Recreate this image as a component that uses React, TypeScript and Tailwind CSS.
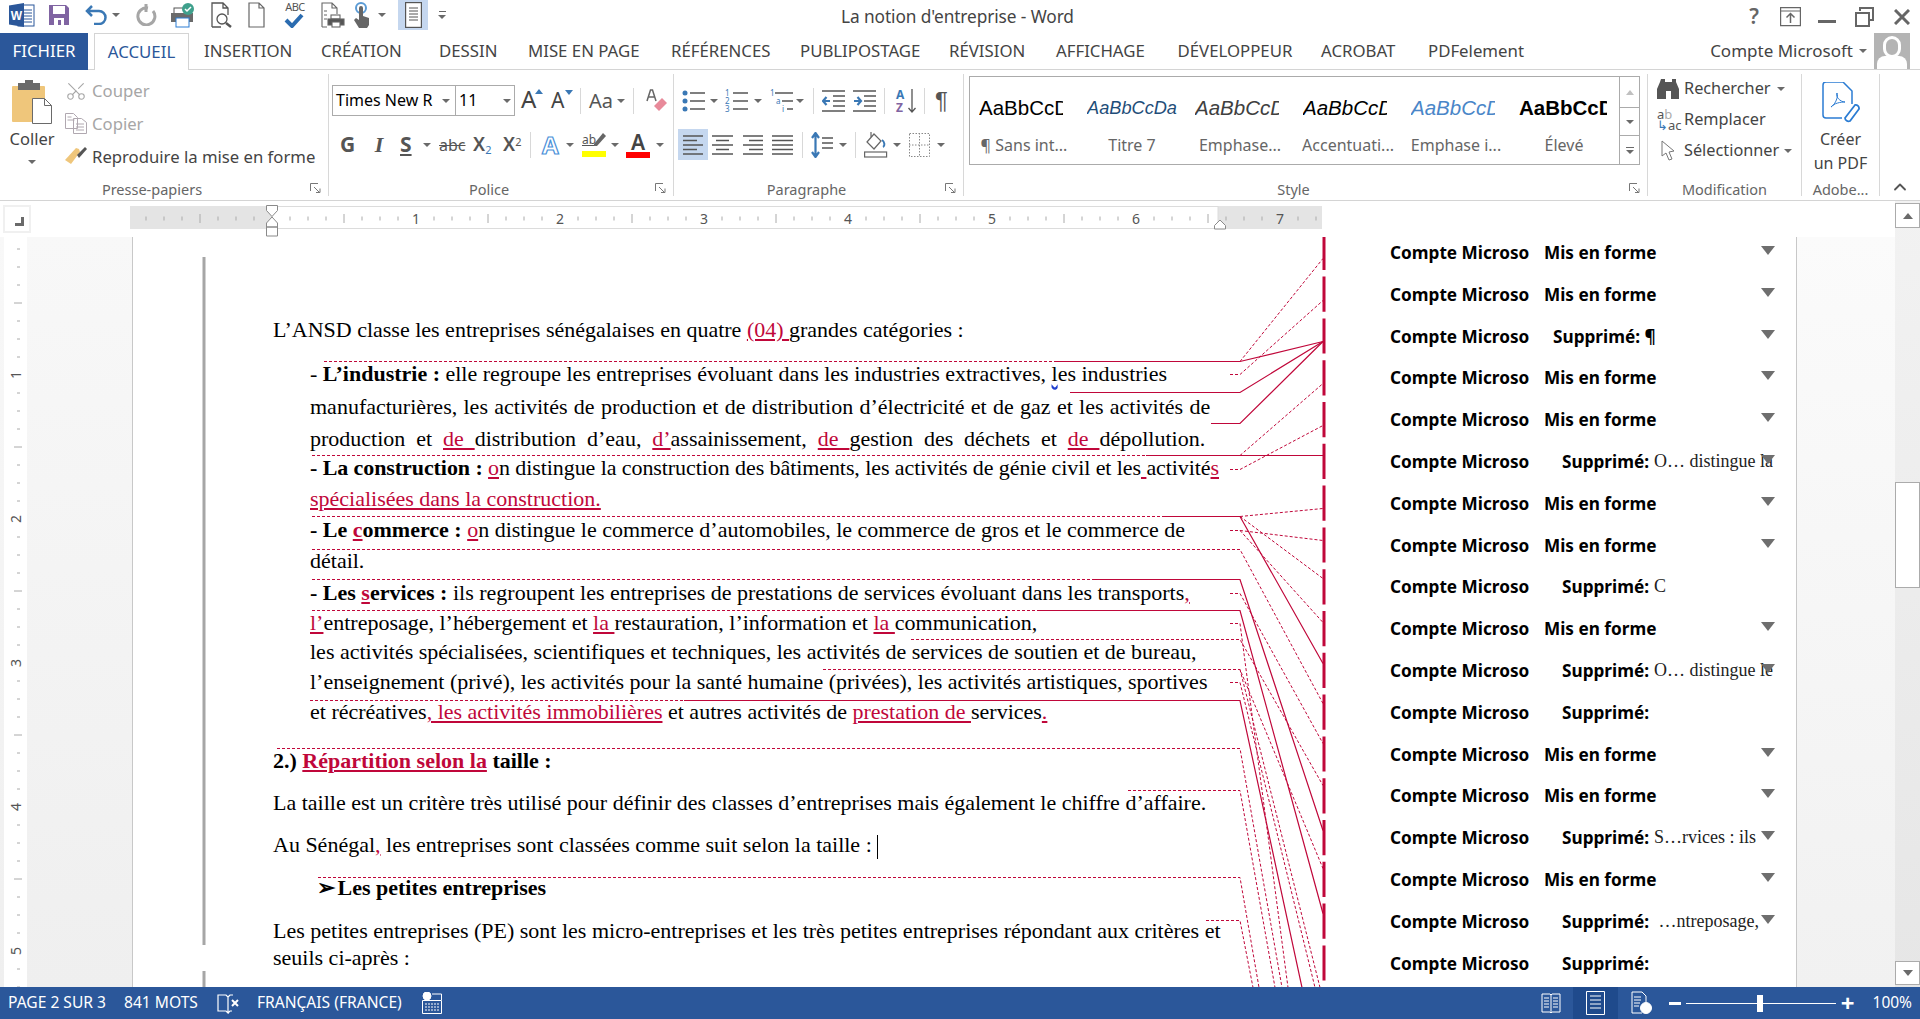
import { ReactNode } from "react";
import { ChevronUp, Scissors } from "lucide-react";

const RED = "#c0073a";

function Caret({ className = "" }: { className?: string }) {
  return <span className={`inline-block w-0 h-0 border-x-[4px] border-t-[4px] border-x-transparent border-t-[#6a6a6a] ${className}`} />;
}

function Sep() {
  return <span className="block w-px h-[26px] bg-[#d8d8d8]" />;
}

function Launcher() {
  return (
    <svg width="11" height="11" viewBox="0 0 11 11" className="absolute right-[7px] top-[1px]" fill="none" stroke="#777">
      <path d="M.5 8V.5H8" />
      <path d="M4 4l5 5M6 9.5h4v-4" />
    </svg>
  );
}

function Group({ className, label, launcher, children }: { className: string; label: string; launcher?: boolean; children: ReactNode }) {
  return (
    <div className={`flex flex-col shrink-0 my-[4px] border-r border-[#d8d8d8] ${className}`}>
      <div className="flex-1 min-h-0">{children}</div>
      <div className={`relative h-[14px] leading-[14px] text-center text-[14.5px] text-[#666] whitespace-nowrap ${launcher ? "pr-[24px]" : ""}`}>
        {label}
        {launcher && <Launcher />}
      </div>
    </div>
  );
}

function Lines({ d, w = 23, h = 24 }: { d: string; w?: number; h?: number }) {
  return (
    <svg width={w} height={h} viewBox={`0 0 ${w} ${h}`} fill="none" stroke="#555" strokeWidth="1.4">
      <path d={d} />
    </svg>
  );
}

function WordLogo() {
  return (
    <svg width="26" height="26" viewBox="0 0 26 26">
      <rect x="9" y="3" width="16" height="21" fill="#fff" stroke="#2b579a" />
      <path d="M14 8h9M14 11h9M14 14h9M14 17h9M14 20h9" stroke="#2b579a" />
      <path d="M0 3.5 15 1v24L0 22.5z" fill="#2b579a" />
      <text x="7.5" y="17.5" textAnchor="middle" fontSize="12" fontWeight="700" fill="#fff" fontFamily="Liberation Sans">W</text>
    </svg>
  );
}

function QuickAccess() {
  return (
    <div className="flex items-center h-[30px] shrink-0">
      <span className="ml-[9px]"><WordLogo /></span>
      <svg className="ml-[14px]" width="20" height="20" viewBox="0 0 20 20">
        <path d="M0 0h17l3 3v17H0z" fill="#8064a2" />
        <rect x="4" y="1" width="12" height="8" fill="#fff" />
        <rect x="5" y="13" width="10" height="7" fill="#fff" />
        <rect x="9" y="15" width="3" height="5" fill="#8064a2" />
      </svg>
      <svg className="ml-[16px]" width="23" height="20" viewBox="0 0 23 20" fill="none" stroke="#3a78b5" strokeWidth="2.5">
        <path d="M7 1 2 6l5 5M2 6h12a6.5 6.5 0 0 1 0 13H9" />
      </svg>
      <Caret className="ml-[4px]" />
      <svg className="ml-[15px]" width="22" height="22" viewBox="0 0 22 22" fill="none" stroke="#a6a6a6" strokeWidth="3">
        <path d="M13 4a8.5 8.5 0 1 0 5 3M11 0v8" />
      </svg>
      <svg className="ml-[14px]" width="24" height="26" viewBox="0 0 24 26">
        <rect x="3" y="6" width="14" height="6" fill="#fff" stroke="#555" />
        <rect x="0" y="11" width="22" height="9" fill="#6a6a6a" />
        <rect x="5" y="16" width="13" height="9" fill="#fff" stroke="#2b7cd3" />
        <circle cx="17" cy="7" r="6" fill="#3fa08c" />
        <path d="m14 7 2 2 4-4" stroke="#fff" strokeWidth="1.5" fill="none" />
      </svg>
      <svg className="ml-[16px]" width="22" height="26" viewBox="0 0 22 26" fill="none" stroke="#555" strokeWidth="1.3">
        <path d="M1 25V1h11l5 5v7M12 1v5h5M1 25h9" />
        <circle cx="11" cy="17" r="5" />
        <path d="m15 21 5 4" strokeWidth="2.5" />
      </svg>
      <svg className="ml-[15px]" width="17" height="26" viewBox="0 0 17 26" fill="#fff" stroke="#666" strokeWidth="1.2">
        <path d="M1 25V1h10l5 5v19zM11 1v5h5" />
      </svg>
      <div className="ml-[19px] w-[22px] h-[28px]">
        <span className="block text-[11px] leading-[11px] text-[#555] text-center tracking-[-0.5px]">ABC</span>
        <svg width="20" height="15" viewBox="0 0 20 15" className="mt-[1px]" fill="none" stroke="#2b6cb0" strokeWidth="4">
          <path d="m2 7 6 6L18 2" />
        </svg>
      </div>
      <svg className="ml-[15px]" width="24" height="26" viewBox="0 0 24 26" fill="none" stroke="#666" strokeWidth="1.1">
        <path d="M1 25V1h10l5 5v6M11 1v5h5M1 25h5" />
        <path d="M3 9h3M3 13h3M3 17h3" />
        <rect x="10" y="13" width="9" height="4" fill="#fff" />
        <rect x="7" y="17" width="16" height="6" fill="#555" />
        <rect x="11" y="20" width="8" height="5" fill="#fff" />
      </svg>
      <svg className="ml-[9px]" width="17" height="26" viewBox="0 0 17 26">
        <circle cx="7" cy="6" r="5" fill="none" stroke="#5b9bd5" strokeWidth="2" />
        <path d="M5 6a2 2 0 0 1 4 0v8l6 2v7l-2 3H5l-5-8 2-2 3 2z" fill="#666" />
      </svg>
      <Caret className="ml-[7px]" />
      <div className="ml-[12px] flex items-center justify-center w-[30px] h-[30px] bg-[#c5d7ef]">
        <svg width="17" height="26" viewBox="0 0 17 26" fill="#fff" stroke="#555" strokeWidth="1.2">
          <rect x=".6" y=".6" width="15.8" height="24.8" />
          <path d="M4 6h9M4 9h9M4 12h9M4 15h9M4 18h9" strokeWidth="1" />
        </svg>
      </div>
      <span className="ml-[10px] flex flex-col items-center gap-[3px]">
        <span className="w-[7px] h-px bg-[#666]" />
        <Caret />
      </span>
    </div>
  );
}

function TitleBar() {
  return (
    <div className="flex h-[33px] items-start shrink-0 text-[#444]">
      <QuickAccess />
      <div className="ml-[395px] mt-[5px] text-[17.3px] leading-[24px] tracking-[-0.1px] whitespace-nowrap">La notion d'entreprise - Word</div>
      <div className="ml-auto flex items-center h-[33px] mr-[10px] text-[#666]">
        <span className="text-[21px] font-semibold leading-none">?</span>
        <svg className="ml-[21px]" width="21" height="20" viewBox="0 0 21 20" fill="none" stroke="#666" strokeWidth="1.2">
          <path d="M.6.6h19.8v18H.6zM.6 4h19.8" />
          <path d="M10.5 16V7M6.5 10.5l4-4 4 4" strokeWidth="1.5" />
        </svg>
        <span className="ml-[17px] mt-[9px] w-[18px] h-[3px] bg-[#666]" />
        <svg className="ml-[19px]" width="19" height="20" viewBox="0 0 19 20" fill="none" stroke="#666" strokeWidth="2">
          <path d="M5 4V1h13v12h-4" />
          <path d="M1 6h13v13H1z" />
        </svg>
        <svg className="ml-[20px]" width="16" height="16" viewBox="0 0 16 16" fill="none" stroke="#666" strokeWidth="3">
          <path d="m1 1 14 14M15 1 1 15" />
        </svg>
      </div>
    </div>
  );
}

const TABS = [
  { label: "INSERTION", className: "ml-[15px] w-[117px]" },
  { label: "CRÉATION", className: "w-[118px]" },
  { label: "DESSIN", className: "w-[89px]" },
  { label: "MISE EN PAGE", className: "w-[143px]" },
  { label: "RÉFÉRENCES", className: "w-[129px]" },
  { label: "PUBLIPOSTAGE", className: "w-[149px]" },
  { label: "RÉVISION", className: "w-[107px]" },
  { label: "AFFICHAGE", className: "w-[121.5px]" },
  { label: "DÉVELOPPEUR", className: "w-[143.5px]" },
  { label: "ACROBAT", className: "w-[107px]" },
  { label: "PDFelement", className: "w-[100px]" },
];

function TabRow() {
  return (
    <div className="flex h-[37px] shrink-0 border-b border-[#d4d4d4] text-[16.8px] leading-[36px] text-[#444]">
      <div className="w-[88px] h-[37px] bg-[#2b579a] text-white text-center">FICHIER</div>
      <div className="ml-[6px] w-[95px] h-[37px] border-x border-t border-[#d4d4d4] bg-white text-[#2b579a] text-center">ACCUEIL</div>
      {TABS.map((t) => (
        <div key={t.label} className={`shrink-0 whitespace-nowrap ${t.className}`}>{t.label}</div>
      ))}
      <div className="ml-auto flex items-center h-[36px] whitespace-nowrap text-[17px]">
        Compte Microsoft
        <Caret className="ml-[6px] mr-[7px]" />
        <div className="relative w-[36px] h-[36px] mr-[10px] bg-[#b4b4b4] overflow-hidden">
          <span className="absolute left-[9px] top-[3px] w-[18px] h-[22px] rounded-full border-[3px] border-white" />
          <span className="absolute left-[3px] top-[23px] w-[30px] h-[16px] rounded-t-[8px] bg-white" />
        </div>
      </div>
    </div>
  );
}

function Clipboard() {
  return (
    <div className="flex pt-[6px]">
      <div className="w-[64px] flex flex-col items-center text-[16.5px] text-[#444] shrink-0">
        <svg width="42" height="44" viewBox="0 0 42 44">
          <rect x="1" y="6" width="33" height="36" rx="1" fill="#efc67b" />
          <rect x="7" y="3" width="22" height="7" fill="#6a6a6a" />
          <rect x="14" y="0" width="8" height="5" fill="#6a6a6a" />
          <path d="M21.5 18.5h12l7 7v18h-19z" fill="#fff" stroke="#6a6a6a" />
          <path d="M33.5 18.5v7h7" fill="none" stroke="#6a6a6a" />
        </svg>
        <span className="leading-[24px] mt-[3px]">Coller</span>
        <Caret className="mt-[9px]" />
      </div>
      <div className="ml-[1px] -mt-[6px] text-[16.7px] leading-[33px] whitespace-nowrap">
        <div className="flex items-center text-[#a6a6a6] h-[33px]">
          <Scissors size={22} strokeWidth={1.2} className="-rotate-90 shrink-0" />
          <span className="ml-[5px]">Couper</span>
        </div>
        <div className="flex items-center text-[#a6a6a6] h-[33px]">
          <svg width="22" height="21" viewBox="0 0 22 21" fill="#fff" stroke="#b0a8b0">
            <path d="M.5.5h8l4 4v11H.5zM8.5 5.5h8l5 4v11h-13zM2.5 4h4M2.5 7h7M11 11h8M11 14h8M11 17h8" />
          </svg>
          <span className="ml-[5px]">Copier</span>
        </div>
        <div className="flex items-center text-[#444] h-[33px] -ml-[1px]">
          <svg width="24" height="22" viewBox="0 0 24 22">
            <path d="m12 2 3 1 1 3-9 12-6-4z" fill="#efc67b" />
            <path d="M13 9 21 1l2 2-8 9z" fill="#555" />
          </svg>
          <span className="ml-[4px]">Reproduire la mise en forme</span>
        </div>
      </div>
    </div>
  );
}

function SmallA({ dir }: { dir: "up" | "down" }) {
  return (
    <span className="relative block w-[24px] text-[#444] leading-[26px]">
      <span className={dir === "up" ? "text-[24px]" : "text-[21px]"}>A</span>
      <span className={`absolute right-[2px] top-[3px] w-0 h-0 border-x-[4px] border-x-transparent ${dir === "up" ? "border-b-[5px] border-b-[#3a78b5]" : "border-t-[5px] border-t-[#3a78b5]"}`} />
    </span>
  );
}

function Police() {
  return (
    <div>
      <div className="flex items-center h-[31px] mt-[11px]">
        <div className="ml-[3px] flex w-[183px] h-[31px] border border-[#ababab] text-[16px] leading-[29px] text-black shrink-0">
          <div className="w-[123px] border-r border-[#ababab] pl-[3px] flex items-center whitespace-nowrap">
            Times New R
            <Caret className="ml-auto mr-[5px]" />
          </div>
          <div className="flex-1 pl-[3px] flex items-center">
            11
            <Caret className="ml-auto mr-[3px]" />
          </div>
        </div>
        <span className="ml-[6px]"><SmallA dir="up" /></span>
        <span className="ml-[6px]"><SmallA dir="down" /></span>
        <span className="ml-[5px]"><Sep /></span>
        <span className="ml-[8px] w-[28px] text-[20px] text-[#555] whitespace-nowrap">Aa</span>
        <Caret />
        <span className="ml-[8px]"><Sep /></span>
        <svg className="ml-[12px]" width="21" height="24" viewBox="0 0 21 24">
          <path d="M1 12 4.5 1h2L10 12M2.5 8h6" fill="none" stroke="#666" strokeWidth="1.5" />
          <path d="m8 17 8-8 5 5-8 8z" fill="#e88a9a" />
        </svg>
      </div>
      <div className="flex items-center h-[31px] mt-[13px] text-[#555]">
        <span className="ml-[11px] w-[16px] text-[21px] font-bold">G</span>
        <span className="ml-[14px] w-[18px] text-[22px] italic font-bold font-['Liberation_Serif'] text-center">I</span>
        <span className="ml-[12px] w-[14px] text-[21px] font-bold underline">S</span>
        <Caret className="ml-[9px]" />
        <span className="ml-[8px] w-[25px] text-[16px] line-through">abc</span>
        <span className="ml-[9px] w-[20px] text-[19px] font-semibold whitespace-nowrap">X<sub className="text-[11px] text-[#3a78b5] font-normal">2</sub></span>
        <span className="ml-[10px] w-[20px] text-[19px] font-semibold whitespace-nowrap">X<sup className="text-[11px] font-normal">2</sup></span>
        <span className="ml-[7px]"><Sep /></span>
        <span className="ml-[11px] w-[20px] text-[24px] leading-[28px] font-bold text-white [-webkit-text-stroke:1.2px_#4a90d9]">A</span>
        <Caret className="ml-[4px]" />
        <span className="ml-[8px] w-[24px] flex flex-col">
          <span className="relative text-[12px] leading-[16px] h-[19px] underline">
            ab
            <svg width="14" height="16" viewBox="0 0 14 16" className="absolute right-0 top-0">
              <path d="m2 12 9-11 3 3-9 10H2z" fill="#666" />
            </svg>
          </span>
          <span className="h-[6px] bg-[#ffff00]" />
        </span>
        <Caret className="ml-[5px]" />
        <span className="ml-[7px] w-[24px] flex flex-col items-center">
          <span className="text-[21px] leading-[20px] font-semibold text-[#444]">A</span>
          <span className="w-[24px] h-[6px] bg-[#ff0000]" />
        </span>
        <Caret className="ml-[6px]" />
      </div>
    </div>
  );
}

function Paragraphe() {
  return (
    <div>
      <div className="flex items-center h-[31px] mt-[11px]">
        <span className="ml-[8px] flex">
          <svg width="23" height="24" viewBox="0 0 23 24" fill="none">
            <circle cx="3" cy="4" r="2.5" fill="#3a78b5" />
            <circle cx="3" cy="12" r="2.5" fill="#3a78b5" />
            <circle cx="3" cy="20" r="2.5" fill="#3a78b5" />
            <path d="M8 4h15M8 12h15M8 20h15" stroke="#555" strokeWidth="1.4" />
          </svg>
        </span>
        <Caret className="ml-[5px]" />
        <span className="ml-[7px] flex">
          <svg width="23" height="24" viewBox="0 0 23 24" fill="none">
            <text x="0" y="7" fontSize="8" fill="#3a78b5">1</text>
            <text x="0" y="15" fontSize="8" fill="#3a78b5">2</text>
            <text x="0" y="23" fontSize="8" fill="#3a78b5">3</text>
            <path d="M8 4h15M8 12h15M8 20h15" stroke="#555" strokeWidth="1.4" />
          </svg>
        </span>
        <Caret className="ml-[6px]" />
        <span className="ml-[8px] flex">
          <svg width="23" height="24" viewBox="0 0 23 24" fill="none">
            <text x="0" y="7" fontSize="8" fill="#3a78b5">1</text>
            <text x="6" y="15" fontSize="8" fill="#3a78b5">a</text>
            <text x="12" y="23" fontSize="8" fill="#3a78b5">i</text>
            <path d="M5 4h18M12 12h11M17 20h6" stroke="#555" strokeWidth="1.4" />
          </svg>
        </span>
        <Caret className="ml-[3px]" />
        <span className="ml-[9px]"><Sep /></span>
        <svg className="ml-[8px]" width="23" height="24" viewBox="0 0 23 24" fill="none" stroke="#555" strokeWidth="1.3">
          <path d="M0 2h23M11 7h12M11 12h12M11 17h12M0 22h23" />
          <path d="M8 12H1M4.5 8 1 12l3.5 4" stroke="#3a78b5" strokeWidth="2.2" />
        </svg>
        <svg className="ml-[8px]" width="23" height="24" viewBox="0 0 23 24" fill="none" stroke="#555" strokeWidth="1.3">
          <path d="M0 2h23M11 7h12M11 12h12M11 17h12M0 22h23" />
          <path d="M1 12h7M4.5 8 8 12l-3.5 4" stroke="#3a78b5" strokeWidth="2.2" />
        </svg>
        <span className="ml-[8px]"><Sep /></span>
        <span className="ml-[11px] relative flex flex-col w-[20px] text-[12px] leading-[13px] font-bold">
          <span className="text-[#3a78b5]">A</span>
          <span className="text-[#8064a2]">Z</span>
          <svg width="8" height="24" viewBox="0 0 8 24" className="absolute right-0 top-[1px]" fill="none" stroke="#555" strokeWidth="1.3">
            <path d="M4 0v23M.5 19 4 23l3.5-4" />
          </svg>
        </span>
        <span className="ml-[8px]"><Sep /></span>
        <span className="ml-[10px] text-[24px] leading-none text-[#555] font-['Liberation_Sans']">¶</span>
      </div>
      <div className="flex items-center h-[31px] mt-[13px]">
        <span className="ml-[4px] flex items-center justify-center w-[30px] h-[31px] bg-[#c5d7ef]">
          <Lines w={22} h={22} d="M1 2h20M1 6.5h14M1 11h20M1 15.5h14M1 20h20" />
        </span>
        <span className="ml-[4px] flex"><Lines w={21} h={22} d="M0 2h21M4 6.5h13M0 11h21M4 15.5h13M0 20h21" /></span>
        <span className="ml-[10px] flex"><Lines w={20} h={22} d="M0 2h20M6 6.5h14M0 11h20M6 15.5h14M0 20h20" /></span>
        <span className="ml-[9px] flex"><Lines w={21} h={22} d="M0 2h21M0 6.5h21M0 11h21M0 15.5h21M0 20h21" /></span>
        <span className="ml-[9px]"><Sep /></span>
        <svg className="ml-[8px]" width="23" height="26" viewBox="0 0 23 26" fill="none">
          <path d="M4.5 2v22M1 6l3.5-5L8 6M1 20l3.5 5L8 20" stroke="#3a78b5" strokeWidth="2.2" />
          <path d="M11 6h11M11 11h11M11 16h11" stroke="#555" strokeWidth="1.4" />
        </svg>
        <Caret className="ml-[5px]" />
        <span className="ml-[8px]"><Sep /></span>
        <svg className="ml-[8px]" width="24" height="27" viewBox="0 0 24 27" fill="none" stroke="#666" strokeWidth="1.2">
          <path d="m3 11 7-8 7 7-7 8zM7 1v5" />
          <path d="M18 9c3 2 3 6 1 7" stroke="#3a78b5" strokeWidth="2" />
          <rect x=".6" y="21" width="22" height="5" />
        </svg>
        <Caret className="ml-[5px]" />
        <svg className="ml-[8px]" width="21" height="24" viewBox="0 0 21 24" fill="none" stroke="#888" strokeDasharray="1.5 1.5">
          <path d="M.5.5h20v23H.5zM10.5 0v24M0 12h21" />
        </svg>
        <Caret className="ml-[7px]" />
      </div>
    </div>
  );
}

const STYLES = [
  { preview: "AaBbCcD", name: "¶ Sans int...", className: "w-[84px] text-[20.5px] text-black" },
  { preview: "AaBbCcDa", name: "Titre 7", className: "w-[93px] text-[18.2px] italic text-[#1f4e79]" },
  { preview: "AaBbCcD", name: "Emphase...", className: "w-[84px] text-[20.5px] italic text-[#404040]" },
  { preview: "AaBbCcD", name: "Accentuati...", className: "w-[84px] text-[20.5px] italic text-black" },
  { preview: "AaBbCcD", name: "Emphase i...", className: "w-[84px] text-[20.5px] italic text-[#4a86c8]" },
  { preview: "AaBbCcD", name: "Élevé", className: "w-[88px] text-[20.5px] font-bold text-black" },
];

function Styles() {
  return (
    <div className="ml-[5px] mt-[2px] flex w-[671px] h-[89px] border border-[#ababab]">
      {STYLES.map((s) => (
        <div key={s.name} className="w-[108px] shrink-0">
          <div className={`ml-[9px] mt-[18px] h-[26px] overflow-hidden whitespace-nowrap font-['Liberation_Sans'] leading-[26px] ${s.className}`}>{s.preview}</div>
          <div className="mt-[12px] text-center text-[16px] leading-[24px] text-[#666] whitespace-nowrap">{s.name}</div>
        </div>
      ))}
      <div className="ml-auto w-[20px] border-l border-[#ababab] flex flex-col">
        <div className="h-[31px] flex items-center justify-center border-b border-[#ababab]">
          <span className="w-0 h-0 border-x-[4px] border-b-[5px] border-x-transparent border-b-[#c0c0c0]" />
        </div>
        <div className="h-[28px] flex items-center justify-center border-b border-[#ababab]">
          <Caret />
        </div>
        <div className="flex-1 flex flex-col items-center justify-center gap-[2px]">
          <span className="w-[8px] h-px bg-[#6a6a6a]" />
          <Caret />
        </div>
      </div>
    </div>
  );
}

function Modification() {
  return (
    <div className="-mt-[1px] text-[16.3px] text-[#444] whitespace-nowrap">
      <div className="flex items-center h-[31px] ml-[9px]">
        <svg width="23" height="20" viewBox="0 0 23 20" fill="#555">
          <path d="M4 0h4v3h7V0h4v3l3 7v10h-8v-8h-5v8H0V10l3-7z" />
        </svg>
        <span className="ml-[4px] w-[93px]">Rechercher</span>
        <Caret />
      </div>
      <div className="flex items-center h-[31px] ml-[9px]">
        <span className="w-[23px] flex flex-col text-[13px] leading-[11px] text-[#555]">
          <span>a<span className="text-[#aaa]">b</span></span>
          <span className="whitespace-nowrap"><span className="text-[#3a78b5]">↳</span>ac</span>
        </span>
        <span className="ml-[4px]">Remplacer</span>
      </div>
      <div className="flex items-center h-[31px] ml-[9px]">
        <svg width="23" height="22" viewBox="0 0 23 22" fill="#fff" stroke="#777">
          <path d="M5 1v15l4-3 3 7 3-1-3-7 5-1z" />
        </svg>
        <span className="ml-[4px] w-[100px]">Sélectionner</span>
        <Caret />
      </div>
    </div>
  );
}

function Adobe() {
  return (
    <div className="flex flex-col items-center text-[16px] text-[#444] leading-[24px]">
      <svg className="mt-[8px]" width="38" height="42" viewBox="0 0 38 42" fill="none" stroke="#2b7cd3" strokeWidth="1.5">
        <path d="M20 36H4a3 3 0 0 1-3-3V3a3 3 0 0 1 3-3h17l9 9v13" />
        <path d="M9 25c3-1 8-10 6-14-2 3 3 9 8 9-4 0-11 1-14 5z" strokeWidth="1" />
        <path d="m23 36 10-13a3.5 3.5 0 0 1 4 4l-9 12a3.5 3.5 0 0 1-5-3z" strokeWidth="1.8" />
      </svg>
      <span className="mt-[3px]">Créer</span>
      <span>un PDF</span>
    </div>
  );
}

function Ribbon() {
  return (
    <div className="flex h-[131px] shrink-0 border-b border-[#d4d4d4]">
      <Group className="w-[329px]" label="Presse-papiers" launcher>
        <Clipboard />
      </Group>
      <Group className="w-[345px]" label="Police" launcher>
        <Police />
      </Group>
      <Group className="w-[290px]" label="Paragraphe" launcher>
        <Paragraphe />
      </Group>
      <Group className="w-[684px]" label="Style" launcher>
        <Styles />
      </Group>
      <Group className="w-[154px]" label="Modification">
        <Modification />
      </Group>
      <Group className="w-[78px]" label="Adobe...">
        <Adobe />
      </Group>
      <div className="flex-1 flex items-end justify-center pb-[3px]">
        <ChevronUp size={20} strokeWidth={2.2} color="#555" />
      </div>
    </div>
  );
}

function HorizontalRuler() {
  const ticks = Array.from({ length: 66 }, (_, i) => i - 7);
  return (
    <div className="flex h-[36px] shrink-0 bg-white">
      <div className="ml-[3px] mt-[4px] w-[28px] h-[28px] bg-[#f0f0f0] p-[2px]">
        <div className="relative w-full h-full bg-white">
          <span className="absolute left-[10px] bottom-[5px] w-[9px] h-[9px] border-r-[3px] border-b-[3px] border-[#6a6a6a]" />
        </div>
      </div>
      <svg className="ml-[99px]" width="1192" height="36" viewBox="0 0 1192 36">
        <rect x="0" y="5" width="1192" height="23" fill="#e4e4e4" />
        <rect x="142" y="5.5" width="946" height="22" fill="#fff" stroke="#dcdcdc" />
        {ticks.map((k) => {
          const x = 142 + k * 18;
          const mod = ((k % 8) + 8) % 8;
          if (mod === 0) return null;
          return <path key={k} d={mod === 4 ? `M${x} 13v9` : `M${x} 15.5v4`} stroke="#aaa" />;
        })}
        {[1, 2, 3, 4, 5, 6, 7].map((n) => (
          <text key={n} x={142 + n * 144} y="22.5" textAnchor="middle" fontSize="14" fill="#555" fontFamily="Noto Sans">{n}</text>
        ))}
        <path d="M136.5 4.5h11v5l-5.5 6-5.5-6z M142 16l5.5 6v4h-11v-4z M136.5 26h11v9h-11z" fill="#fff" stroke="#8a8a8a" />
        <path d="M1084.5 28v-3.5l5.5-5.5 5.5 5.5V28z" fill="#fff" stroke="#8a8a8a" />
      </svg>
    </div>
  );
}

function VerticalRuler() {
  const ticks = Array.from({ length: 42 }, (_, i) => i);
  return (
    <div className="flex shrink-0 w-[132px] bg-gradient-to-b from-[#f8f8f8] to-[#efefef]">
      <svg className="ml-[4px] bg-white shrink-0" width="23" height="750" viewBox="0 0 23 750">
        {ticks.map((i) => {
          const y = 12 + i * 18;
          const mod = i % 8;
          if (mod === 7) return null;
          return <path key={i} d={mod === 3 ? `M10 ${y}h8` : `M13 ${y}h3`} stroke="#aaa" />;
        })}
        {[1, 2, 3, 4, 5].map((n) => {
          const y = 138 + (n - 1) * 144;
          return <text key={n} x="12" y={y} transform={`rotate(-90 12 ${y})`} dy="5" textAnchor="middle" fontSize="14" fill="#555" fontFamily="Noto Sans">{n}</text>;
        })}
      </svg>
    </div>
  );
}

function R({ children }: { children: ReactNode }) {
  return <span className="text-[#c0073a] underline decoration-[#c0073a] decoration-[1.5px] underline-offset-[2px]">{children}</span>;
}

function Line({ className, children }: { className: string; children: ReactNode }) {
  return <div className={`shrink-0 whitespace-pre leading-[24px] ${className}`}>{children}</div>;
}

function DocText() {
  return (
    <div className="flex flex-col pl-[140px] pt-[81px] w-[1190px] shrink-0 font-['Liberation_Serif'] text-[22px] text-black">
      <Line className="h-[44px]">L’ANSD classe les entreprises sénégalaises en quatre <R>(04) </R>grandes catégories :</Line>
      <Line className="h-[33px] pl-[37px]">- <b>L’industrie :</b> elle regroupe les entreprises évoluant dans les industries extractives, <span className="underline decoration-wavy decoration-[#2040d0]">l</span>es industries</Line>
      <Line className="h-[32px] pl-[37px] [word-spacing:0.8px]">manufacturières, les activités de production et de distribution d’électricité et de gaz et les activités de</Line>
      <Line className="h-[29px] pl-[37px] [word-spacing:5.4px]">production et <R>de </R>distribution d’eau, <R>d’</R>assainissement, <R>de </R>gestion des déchets et <R>de </R>dépollution.</Line>
      <Line className="h-[31px] pl-[37px] tracking-[-0.08px]"><b>- La construction : </b><R>o</R>n distingue la construction des bâtiments, les activités de génie civil et les<R> </R>activité<R>s</R></Line>
      <Line className="h-[31px] pl-[37px]"><R>spécialisées dans la construction.</R></Line>
      <Line className="h-[31px] pl-[37px]"><b>- Le <R>c</R>ommerce : </b><R>o</R>n distingue le commerce d’automobiles, le commerce de gros et le commerce de</Line>
      <Line className="h-[32px] pl-[37px]">détail.</Line>
      <Line className="h-[30px] pl-[37px]"><b>- Les <R>s</R>ervices : </b>ils regroupent les entreprises de prestations de services évoluant dans les transports<R>,</R></Line>
      <Line className="h-[29px] pl-[37px]"><R>l’</R>entreposage, l’hébergement et <R>la </R>restauration, l’information et <R>la </R>communication,</Line>
      <Line className="h-[30px] pl-[37px]">les activités spécialisées, scientifiques et techniques, les activités de services de soutien et de bureau,</Line>
      <Line className="h-[30px] pl-[37px]">l’enseignement (privé), les activités pour la santé humaine (privées), les activités artistiques, sportives</Line>
      <Line className="h-[49px] pl-[37px]">et récréatives<R>, les activités immobilières</R> et autres activités de <R>prestation de </R>services<R>.</R></Line>
      <Line className="h-[42px]"><b>2.) <R>Répartition selon la</R> taille :</b></Line>
      <Line className="h-[42px]">La taille est un critère très utilisé pour définir des classes d’entreprises mais également le chiffre d’affaire.</Line>
      <Line className="h-[43px]">Au Sénégal<R>,</R> les entreprises sont classées comme suit selon la taille : <span className="inline-block align-middle w-px h-[24px] bg-black" /></Line>
      <Line className="h-[43px] pl-[44px] font-bold"><span className="-mr-[3px]">➢ </span>Les petites entreprises</Line>
      <Line className="h-[27px]">Les petites entreprises (PE) sont les micro-entreprises et les très petites entreprises répondant aux critères et</Line>
      <Line className="h-[24px]">seuils ci-après :</Line>
    </div>
  );
}

type Balloon = { kind: string; value?: string; className?: string; arrow?: boolean };

const MIS: Balloon = { kind: "Mis en forme", className: "ml-0", arrow: true };

const BALLOONS: Balloon[] = [
  MIS,
  MIS,
  { kind: "Supprimé: ¶", className: "ml-[9px]", arrow: true },
  MIS,
  MIS,
  { kind: "Supprimé:", value: "O… distingue la", className: "ml-[18px]", arrow: true },
  MIS,
  MIS,
  { kind: "Supprimé:", value: "C", className: "ml-[18px]" },
  MIS,
  { kind: "Supprimé:", value: "O… distingue le", className: "ml-[18px]", arrow: true },
  { kind: "Supprimé:", className: "ml-[18px]" },
  MIS,
  MIS,
  { kind: "Supprimé:", value: "S…rvices : ils", className: "ml-[18px]", arrow: true },
  MIS,
  { kind: "Supprimé:", value: " …ntreposage,", className: "ml-[18px]", arrow: true },
  { kind: "Supprimé:", className: "ml-[18px]" },
];

function Balloons() {
  return (
    <div className="flex-1 border-r border-[#c8c8c8] pl-[67px] text-[17.2px] font-bold leading-[31px] text-black overflow-hidden">
      {BALLOONS.map((b, i) => (
        <div key={i} className="relative flex h-[41.8px] whitespace-pre">
          <span className="w-[154px] shrink-0">Compte Microso</span>
          <span className={b.className}>{b.kind}</span>
          {b.value && <span className="ml-[5px] font-normal font-['Liberation_Serif'] text-[18px] text-[#222]">{b.value}</span>}
          {b.arrow && <span className="absolute left-[371px] top-[9px] w-0 h-0 border-x-[7px] border-t-[9px] border-x-transparent border-t-[#6e6e6e]" />}
        </div>
      ))}
    </div>
  );
}

const SOLID: number[][] = [
  [1057, 361, 1240, 361, 1323, 341],
  [1070, 392, 1240, 392, 1323, 341],
  [1211, 423, 1240, 423, 1323, 341],
  [1146, 455, 1323, 455],
  [1163, 516, 1240, 516, 1323, 663],
  [1094, 579, 1240, 579, 1323, 830],
  [1038, 610, 1240, 610, 1323, 913],
  [684, 700, 1240, 700, 1302, 987],
];

const DASHED: number[][] = [
  [324, 361, 1057, 361],
  [312, 455, 1146, 455],
  [312, 516, 1163, 516],
  [312, 549, 1240, 549, 1323, 703],
  [312, 579, 1094, 579],
  [312, 610, 1038, 610],
  [911, 639, 1240, 639, 1323, 785],
  [823, 669, 1240, 669, 1323, 868],
  [310, 700, 684, 700],
  [277, 748, 1240, 748, 1282, 987],
  [1128, 790, 1240, 790, 1275, 987],
  [318, 877, 1240, 877, 1259, 987],
  [1206, 920, 1240, 920, 1253, 987],
  [1240, 361, 1323, 258],
  [1230, 374, 1240, 374, 1323, 300],
  [1240, 455, 1323, 383],
  [1230, 469, 1240, 469, 1323, 425],
  [1240, 516, 1323, 508],
  [1230, 530, 1240, 530, 1323, 540],
  [1240, 516, 1323, 578],
  [1240, 530, 1323, 622],
  [1230, 593, 1240, 593, 1323, 743],
  [1230, 623, 1240, 623, 1288, 987],
  [1230, 682, 1240, 682, 1315, 987],
  [1240, 669, 1320, 987],
];

const toPoints = (p: number[]) => p.map((v, i) => (i % 2 === 0 ? v : v + 0.5)).join(" ");

function TrackLines() {
  return (
    <svg className="absolute left-0 top-0 pointer-events-none" width="1895" height="750" viewBox="0 237 1895 750" fill="none">
      <path d="M204 257V945M204 971V987" stroke="#a6a6a6" strokeWidth="3" />
      {SOLID.map((p, i) => (
        <polyline key={i} points={toPoints(p)} stroke={RED} strokeWidth="1.2" />
      ))}
      {DASHED.map((p, i) => (
        <polyline key={i} points={toPoints(p)} stroke={RED} strokeWidth="1" strokeDasharray="3 2" />
      ))}
      <path d="M1324 237V987" stroke={RED} strokeWidth="3" strokeDasharray="35.2 6.6" strokeDashoffset="2.2" />
    </svg>
  );
}

function Scrollbar() {
  return (
    <div className="flex flex-col w-[25px] shrink-0 bg-gradient-to-b from-[#f2f2f2] to-[#e6e6e6]">
      <div className="mt-[2px] h-[25px] bg-white border border-[#ababab] flex items-center justify-center">
        <span className="w-0 h-0 border-x-[5px] border-b-[6px] border-x-transparent border-b-[#6a6a6a]" />
      </div>
      <div className="mt-[254px] h-[106px] bg-white border border-[#ababab]" />
      <div className="flex-1" />
      <div className="mb-[2px] h-[24px] bg-white border border-[#ababab] flex items-center justify-center">
        <span className="w-0 h-0 border-x-[5px] border-t-[6px] border-x-transparent border-t-[#6a6a6a]" />
      </div>
    </div>
  );
}

function StatusBar() {
  return (
    <div className="flex items-center h-[32px] shrink-0 bg-[#2b579a] text-white text-[15.6px] whitespace-nowrap">
      <span className="ml-[8px]">PAGE 2 SUR 3</span>
      <span className="ml-[18px]">841 MOTS</span>
      <svg className="ml-[19px]" width="22" height="21" viewBox="0 0 22 21" fill="none" stroke="#fff" strokeWidth="1.2">
        <path d="M1 2h8l2 2v16l-2-2H1zM11 4l2-2h3M11 20l2-2h2" />
        <path d="m15 7 6 6M21 7l-6 6" strokeWidth="2" />
      </svg>
      <span className="ml-[18px]">FRANÇAIS (FRANCE)</span>
      <svg className="ml-[20px]" width="20" height="22" viewBox="0 0 20 22" fill="none" stroke="#fff">
        <circle cx="5" cy="4" r="4" fill="#fff" />
        <path d="M.5 8.5h19v13H.5zM10 2h9.5v6" />
        <path d="M3 12h14M3 15h14M3 18h14" strokeDasharray="2 1" />
      </svg>
      <svg className="ml-auto" width="20" height="22" viewBox="0 0 20 22" fill="none" stroke="#fff">
        <path d="M1 2h8l1 1 1-1h8v18h-8l-1 1-1-1H1zM10 3v18M3 6h5M3 9h5M3 12h5M3 15h5M12 6h5M12 9h5M12 12h5M12 15h5" />
      </svg>
      <div className="ml-[12px] w-[45px] h-[32px] bg-[#1f4a8c] flex items-center justify-center">
        <svg width="19" height="24" viewBox="0 0 19 24" fill="none" stroke="#fff">
          <path d="M.5.5h18v23H.5zM4 5h11M4 9h11M4 13h11M4 17h11" />
        </svg>
      </div>
      <svg className="ml-[13px]" width="21" height="24" viewBox="0 0 21 24" fill="none" stroke="#fff">
        <path d="M11 22H1V1h10l4 4v6M3 6h7M3 9h7M3 12h6M3 15h5" />
        <circle cx="15" cy="17" r="5.5" fill="#fff" />
      </svg>
      <span className="ml-[17px] w-[12px] h-[3px] bg-white" />
      <div className="ml-[5px] relative w-[150px] h-px bg-white">
        <span className="absolute left-[71px] -top-[8px] w-[6px] h-[17px] bg-white" />
      </div>
      <span className="ml-[5px] text-[24px] font-bold leading-none">+</span>
      <span className="ml-[18px] mr-[8px] text-[15.5px]">100%</span>
    </div>
  );
}

export default function App() {
  return (
    <div className="flex flex-col w-[1920px] h-[1019px] overflow-hidden bg-white font-['Noto_Sans',sans-serif]">
      <TitleBar />
      <TabRow />
      <Ribbon />
      <div className="flex h-[786px] shrink-0">
        <div className="flex flex-col w-[1895px] shrink-0">
          <HorizontalRuler />
          <div className="relative flex h-[750px] shrink-0 overflow-hidden">
            <VerticalRuler />
            <div className="flex flex-1 border-l border-[#c8c8c8] bg-white">
              <DocText />
              <Balloons />
              <div className="w-[98px] shrink-0 bg-gradient-to-b from-[#fbfbfb] to-[#f1f1f1]" />
            </div>
            <TrackLines />
          </div>
        </div>
        <Scrollbar />
      </div>
      <StatusBar />
    </div>
  );
}
